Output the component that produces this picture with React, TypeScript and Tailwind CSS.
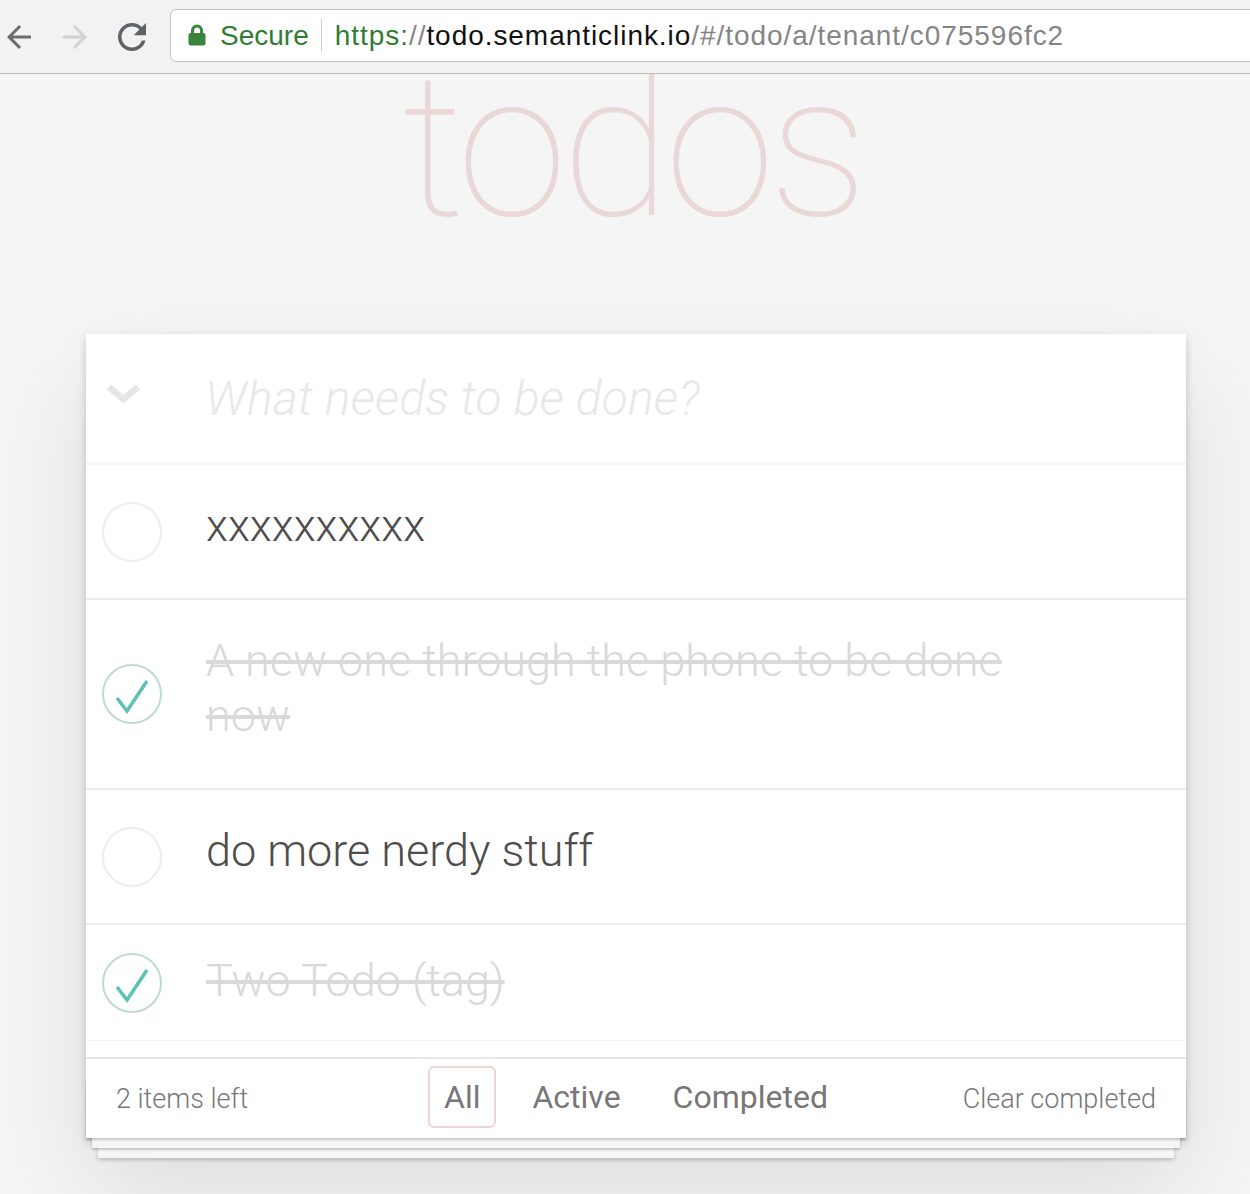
import React from "react";

function BackIcon({ color }: { color: string }) {
  return (
    <svg width="36" height="36" viewBox="0 0 24 24" fill={color}>
      <path d="M20 11H7.83l5.59-5.59L12 4l-8 8 8 8 1.41-1.41L7.83 13H20v-2z" />
    </svg>
  );
}

function ForwardIcon({ color }: { color: string }) {
  return (
    <svg width="36" height="36" viewBox="0 0 24 24" fill={color}>
      <path d="M12 4l-1.41 1.41L16.17 11H4v2h12.17l-5.58 5.59L12 20l8-8z" />
    </svg>
  );
}

function ReloadIcon() {
  return (
    <svg width="42" height="42" viewBox="0 0 24 24" fill="#5f6368">
      <path d="M17.65 6.35C16.2 4.9 14.21 4 12 4c-4.42 0-7.990 3.58-7.99 8s3.57 8 7.99 8c3.73 0 6.84-2.55 7.73-6h-2.08c-.82 2.33-3.04 4-5.65 4-3.310 0-6-2.690-6-6s2.69-6 6-6c1.66 0 3.14.69 4.22 1.78L13 11h7V4l-2.35 2.35z" />
    </svg>
  );
}

function LockIcon() {
  return (
    <svg width="18" height="22" viewBox="0 0 18 22">
      <path d="M4.5 10V6.5a4.5 4.5 0 0 1 9 0V10" fill="none" stroke="#3b843e" strokeWidth="3" />
      <rect x="0.5" y="9" width="17" height="12.5" rx="2" fill="#3b843e" />
    </svg>
  );
}

function BrowserBar() {
  return (
    <div className="h-[74px] bg-[#f2f2f2] border-b border-[#bdbdbd] flex items-start overflow-hidden font-['Liberation_Sans',Arial,sans-serif]">
      <div className="mt-[19px] ml-[1px] shrink-0">
        <BackIcon color="#6a6d70" />
      </div>
      <div className="mt-[19px] ml-[20px] shrink-0">
        <ForwardIcon color="#d2d2d2" />
      </div>
      <div className="mt-[16px] ml-[18px] shrink-0">
        <ReloadIcon />
      </div>
      <div className="mt-[9px] ml-[17px] h-[53px] w-[1200px] shrink-0 bg-white border border-[#c4c4c4] rounded-[6px] flex items-center">
        <div className="ml-[17px] mb-[1px] shrink-0">
          <LockIcon />
        </div>
        <span className="ml-[14px] text-[28px] leading-none text-[#2f7d32] whitespace-nowrap">Secure</span>
        <div className="ml-[12px] w-px h-[33px] bg-[#cfcfcf] shrink-0" />
        <span className="ml-[13px] text-[28px] leading-none tracking-[0.95px] whitespace-nowrap">
          <span className="text-[#2f7d32]">https:</span>
          <span className="text-[#858585]">//</span>
          <span className="text-[#111]">todo.semanticlink.io</span>
          <span className="text-[#858585]">/#/todo/a/tenant/c075596fc2</span>
        </span>
      </div>
    </div>
  );
}

function Toggle({ checked }: { checked: boolean }) {
  return (
    <svg width="62" height="62" viewBox="0 0 62 62" className="shrink-0 ml-[15px]">
      <circle cx="31" cy="31" r="29" fill="none" stroke={checked ? "#bddad5" : "#ededed"} strokeWidth="2" />
      {checked && (
        <polyline points="16,35 26,48 46,18" fill="none" stroke="#5dc2af" strokeWidth="3.5" />
      )}
    </svg>
  );
}

type Todo = { title: string; done: boolean; py: string; last?: boolean };

const todos: Todo[] = [
  { title: "xxxxxxxxxx", done: false, py: "pt-[33px] pb-[45px]" },
  { title: "A new one through the phone to be done now", done: true, py: "pt-[33px] pb-[45px]" },
  { title: "do more nerdy stuff", done: false, py: "pt-[33px] pb-[45px]" },
  { title: "Two Todo (tag)", done: true, py: "pt-[28px] pb-[32px]", last: true },
];

export default function App() {
  return (
    <div className="min-h-[1194px] h-[1194px] bg-[#f5f5f5] overflow-hidden font-['Roboto','Helvetica_Neue',sans-serif]">
      <BrowserBar />
      <div className="ml-[86px] w-[1100px]">
        <div className="h-[260px] overflow-hidden flex justify-center">
          <h1 className="mt-[-27px] ml-[-8px] text-[200px] leading-[200px] font-thin tracking-[-6px] text-[rgba(175,47,47,0.15)]">
            todos
          </h1>
        </div>
        <section className="relative bg-white shadow-[0_4px_8px_0_rgba(0,0,0,0.2),0_50px_100px_0_rgba(0,0,0,0.1)]">
          <div className="h-[131px] flex items-center shadow-[inset_0_-4px_2px_rgba(0,0,0,0.03)]">
            <div className="w-[121px] shrink-0 flex">
              <svg width="40" height="30" viewBox="0 0 40 30" className="ml-[19px] mt-[-10px]">
                <polyline points="4,7 18.5,19 33,7" fill="none" stroke="#e6e6e6" strokeWidth="6.5" />
              </svg>
            </div>
            <span className="ml-[-2px] text-[48px] italic font-light text-[#e8e8e8] leading-none mb-[2px] tracking-[0.2px]">
              What needs to be done?
            </span>
          </div>
          <ul>
            {todos.map((t, i) => (
              <li
                key={i}
                className={
                  t.last
                    ? "flex items-center border-b border-[#f4f4f4]"
                    : "flex items-center border-b-2 border-[#ededed]"
                }
              >
                <div className="w-[121px] shrink-0 flex">
                  <Toggle checked={t.done} />
                </div>
                <label
                  className={
                    "block max-w-[860px] ml-[-1px] text-[45px] leading-[55px] font-light " +
                    t.py +
                    (t.done ? " text-[#d9d9d9] line-through" : " text-[#4d4d4d]")
                  }
                >
                  {t.title}
                </label>
              </li>
            ))}
          </ul>
          <div className="h-[16px]" />
          <footer className="relative h-[81px] border-t-2 border-[#e6e6e6] px-[30px] grid grid-cols-[1fr_auto_1fr] items-center text-[#777]">
            <div className="pointer-events-none absolute left-0 right-0 bottom-0 h-[60px] shadow-[0_2px_2px_rgba(0,0,0,0.2),0_16px_0_-6px_#f6f6f6,0_18px_2px_-6px_rgba(0,0,0,0.2),0_32px_0_-12px_#f6f6f6,0_34px_4px_-12px_rgba(0,0,0,0.2)]" />
            <span className="relative text-[27px] font-light mt-[2px]">2 items left</span>
            <ul className="relative flex items-center gap-[8px] mb-[4px]">
              <li>
                <a className="block mx-[6px] px-[14px] py-[6px] text-[32px] leading-[46px] border-2 border-[rgba(175,47,47,0.2)] rounded-[6px]">
                  All
                </a>
              </li>
              <li>
                <a className="block mx-[6px] px-[14px] py-[6px] text-[32px] leading-[46px] border-2 border-transparent rounded-[6px]">
                  Active
                </a>
              </li>
              <li>
                <a className="block mx-[6px] px-[14px] py-[6px] text-[32px] leading-[46px] border-2 border-transparent rounded-[6px]">
                  Completed
                </a>
              </li>
            </ul>
            <span className="relative justify-self-end text-[27px] font-light mt-[2px]">Clear completed</span>
          </footer>
        </section>
      </div>
    </div>
  );
}
